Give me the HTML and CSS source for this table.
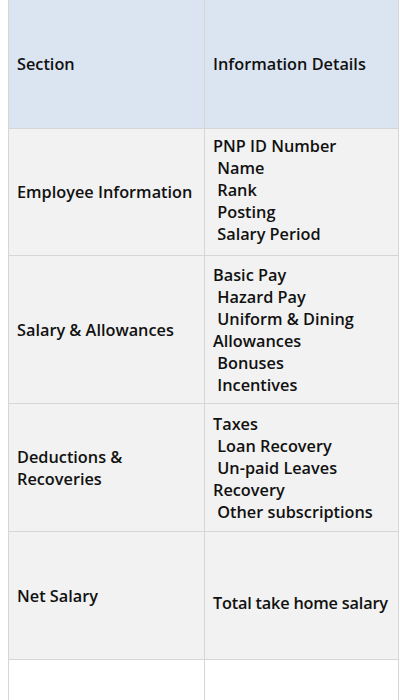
FILE: index.html
```html
<!DOCTYPE html>
<html>
<head>
<meta charset="utf-8">
<link rel="stylesheet" href="styles.css">
</head>
<body>
<table class="grid">
  <tr class="head">
    <th class="c1">Section</th>
    <th class="c2">Information Details</th>
  </tr>
  <tr class="r1">
    <td class="c1">Employee Information</td>
    <td class="c2 pre lift">PNP ID Number
 Name
 Rank
 Posting
 Salary Period</td>
  </tr>
  <tr class="r2">
    <td class="c1">Salary &amp; Allowances</td>
    <td class="c2 pre">Basic Pay
 Hazard Pay
 Uniform &amp; Dining
Allowances
 Bonuses
 Incentives</td>
  </tr>
  <tr class="r3">
    <td class="c1">Deductions &amp;<br>Recoveries</td>
    <td class="c2 pre">Taxes
 Loan Recovery
 Un-paid Leaves
Recovery
 Other subscriptions</td>
  </tr>
  <tr class="r4">
    <td class="c1">Net Salary</td>
    <td class="c2 pre down">Total take home salary</td>
  </tr>
  <tr class="r5">
    <td class="c1"></td>
    <td class="c2"></td>
  </tr>
</table>
</body>
</html>
```
FILE: styles.css
```css
html, body {
  margin: 0;
  padding: 0;
  background: #ffffff;
}
body {
  font-family: "Open Sans", "Noto Sans", sans-serif;
  font-weight: 600;
  font-size: 16.3px;
  color: #111111;
}
.grid {
  margin-left: 8px;
  margin-top: -1px;
  width: 391px;
  border-collapse: collapse;
  table-layout: fixed;
}
.grid th, .grid td {
  border: 1px solid #d6d6d6;
  padding: 0 8px;
  text-align: left;
  vertical-align: middle;
  line-height: 22px;
  font-weight: 600;
}
.grid .c1 { width: 179px; }
.grid .c2 { width: 177px; }
.pre { white-space: pre; }
.head th { background: #dbe5f1; height: 128px; }
.r1 td { background: #f2f2f2; height: 126px; }
.r2 td { background: #f2f2f2; height: 147px; }
.r3 td { background: #f2f2f2; height: 127px; }
.r4 td { background: #f2f2f2; height: 127px; }
.r5 td { background: #ffffff; height: 60px; }
.r1 .lift { padding-bottom: 4px; height: 122px; }
.r4 .down { padding-top: 14px; height: 113px; }
.r4 .down { letter-spacing: -0.2px; }
```
